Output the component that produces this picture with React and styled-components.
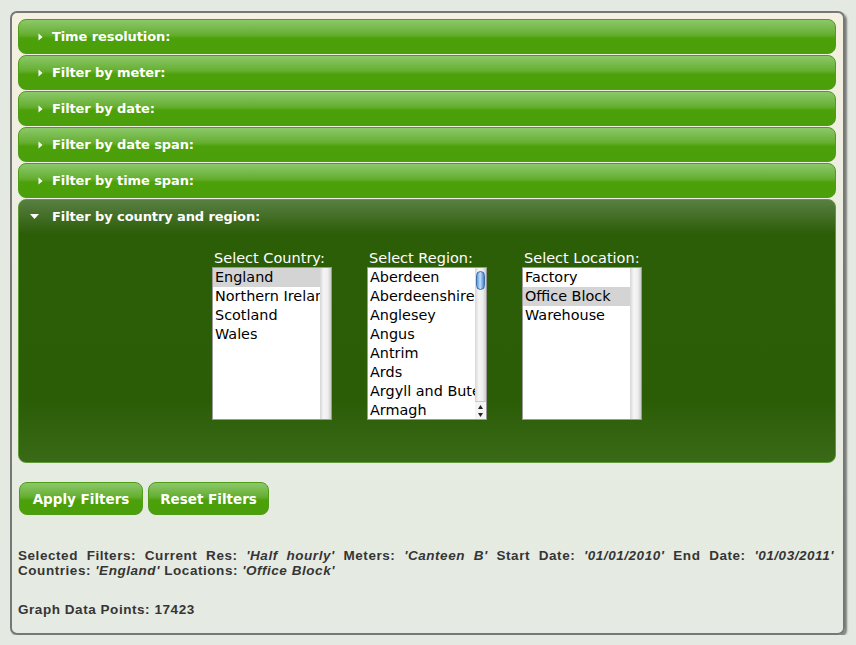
import styled, { createGlobalStyle } from "styled-components";

const GlobalStyle = createGlobalStyle`
  html, body {
    margin: 0;
    padding: 0;
    background: #e4eae2;
  }
  body {
    font-family: "DejaVu Sans", Verdana, sans-serif;
  }
`;

const Page = styled.div`
  padding: 11px 0 0 10px;
`;

const Frame = styled.div`
  box-sizing: border-box;
  width: 835px;
  height: 624px;
  padding: 6px 7px 6px 6px;
  border: 2px solid #777;
  border-radius: 7px;
  background: linear-gradient(#f5f0e0 0, #e9ece2 260px, #e5ebe2 100%);
  box-shadow: 2px 2px 2px rgba(0, 0, 0, 0.45);
`;

const Section = styled.div`
  box-sizing: border-box;
  margin-bottom: 1px;
  border: 1px solid ${(p) => (p.$open ? "#5e9a35" : "#4f9c16")};
  border-radius: 8px;
  background: ${(p) =>
    p.$open
      ? "linear-gradient(#587f43 0, #2c5d07 34px, #2b5c06 200px, #3a6a17 100%)"
      : "linear-gradient(#8cc86b 0, #65ae30 45%, #4ca10b 55%, #4a9f0a 100%)"};
`;

const Header = styled.div`
  height: 33px;
  display: flex;
  align-items: center;
  padding-left: 11px;
  color: #fff;
  font-size: 13px;
  font-weight: bold;
  letter-spacing: -0.1px;
`;

const Arrow = styled.span`
  width: 21px;
  display: flex;
  align-items: center;
  justify-content: ${(p) => (p.$open ? "flex-start" : "center")};
  margin-right: 1px;
`;

const Body = styled.div`
  display: flex;
  justify-content: center;
  gap: 35px;
  padding: 16px 0 42px;
`;

const Field = styled.div`
  display: flex;
  flex-direction: column;
  align-items: flex-start;
`;

const Label = styled.div`
  color: #fff;
  font-size: 14.5px;
  line-height: 18px;
  padding-left: 2px;
`;

const ListBox = styled.div`
  box-sizing: border-box;
  width: 120px;
  height: 153px;
  display: flex;
  border: 1px solid #9a9a9a;
  background: #fff;
  overflow: hidden;
`;

const Items = styled.div`
  flex: 1;
  min-width: 0;
  overflow: hidden;
`;

const Item = styled.div`
  height: 19px;
  line-height: 19px;
  padding-left: 2px;
  font-size: 14.4px;
  color: #000;
  white-space: nowrap;
  overflow: hidden;
  background: ${(p) => (p.$selected ? "#d4d4d4" : "transparent")};
`;

const Track = styled.div`
  width: 11px;
  flex: none;
  position: relative;
  background: linear-gradient(to right, #d6d6d6, #f6f6f6 35%, #eeeeee 70%, #cccccc);
`;

const Thumb = styled.div`
  position: absolute;
  top: 3px;
  left: 1px;
  width: 9px;
  height: 19px;
  border-radius: 5px;
  border: 1px solid #3a6fa8;
  box-sizing: border-box;
  background: linear-gradient(to right, #5f95d4, #c2e2ff 45%, #86b6ea 70%, #4a82c4);
`;

const Steppers = styled.div`
  position: absolute;
  left: 0;
  right: 0;
  bottom: 0;
  display: flex;
  flex-direction: column;
  align-items: center;
  gap: 4px;
  padding: 3px 0 2px;
  background: #f4f4f4;
  border-top: 1px solid #c9c9c9;
`;

const Actions = styled.div`
  display: flex;
  gap: 5px;
  margin: 19px 0 0 1px;
`;

const Button = styled.button`
  box-sizing: border-box;
  width: ${(p) => p.$w}px;
  height: 33px;
  padding: 0;
  border: 1px solid #4f9c16;
  border-radius: 8px;
  background: linear-gradient(#8cc86b 0, #65ae30 45%, #4ca10b 55%, #4a9f0a 100%);
  color: #fff;
  font-family: "DejaVu Sans", Verdana, sans-serif;
  font-size: 13.5px;
  font-weight: bold;
`;

const Summary = styled.div`
  margin-top: 33px;
  font-family: "Liberation Sans", Arial, sans-serif;
  font-size: 13.5px;
  font-weight: bold;
  letter-spacing: 0.55px;
  line-height: 15px;
  color: #353535;
  text-align: justify;
  width: 816px;
`;

const Value = styled.em`
  font-style: italic;
`;

const Points = styled.div`
  margin-top: 24px;
  font-family: "Liberation Sans", Arial, sans-serif;
  font-size: 13.5px;
  font-weight: bold;
  letter-spacing: 0.55px;
  line-height: 15px;
  color: #353535;
`;

const TriRight = () => (
  <svg width="5" height="8" viewBox="0 0 5 8">
    <path d="M0.5 0.5 L4.5 4 L0.5 7.5 Z" fill="#fff" />
  </svg>
);

const TriDown = () => (
  <svg width="9" height="5" viewBox="0 0 9 5">
    <path d="M0 0 L9 0 L4.5 5 Z" fill="#fff" />
  </svg>
);

const closed = [
  "Time resolution:",
  "Filter by meter:",
  "Filter by date:",
  "Filter by date span:",
  "Filter by time span:",
];

const countries = ["England", "Northern Ireland", "Scotland", "Wales"];
const regions = [
  "Aberdeen",
  "Aberdeenshire",
  "Anglesey",
  "Angus",
  "Antrim",
  "Ards",
  "Argyll and Bute",
  "Armagh",
];
const locations = ["Factory", "Office Block", "Warehouse"];

const List = ({ items, selected, scroll }) => (
  <ListBox>
    <Items>
      {items.map((it) => (
        <Item key={it} $selected={it === selected}>
          {it}
        </Item>
      ))}
    </Items>
    <Track>
      {scroll && (
        <>
          <Thumb />
          <Steppers>
            <svg width="5" height="4" viewBox="0 0 5 4">
              <path d="M0 4 L5 4 L2.5 0 Z" fill="#222" />
            </svg>
            <svg width="5" height="4" viewBox="0 0 5 4">
              <path d="M0 0 L5 0 L2.5 4 Z" fill="#222" />
            </svg>
          </Steppers>
        </>
      )}
    </Track>
  </ListBox>
);

export default function App() {
  return (
    <>
      <GlobalStyle />
      <Page>
        <Frame>
          {closed.map((t) => (
            <Section key={t}>
              <Header>
                <Arrow>
                  <TriRight />
                </Arrow>
                {t}
              </Header>
            </Section>
          ))}
          <Section $open>
            <Header>
              <Arrow $open>
                <TriDown />
              </Arrow>
              Filter by country and region:
            </Header>
            <Body>
              <Field>
                <Label>Select Country:</Label>
                <List items={countries} selected="England" />
              </Field>
              <Field>
                <Label>Select Region:</Label>
                <List items={regions} scroll />
              </Field>
              <Field>
                <Label>Select Location:</Label>
                <List items={locations} selected="Office Block" />
              </Field>
            </Body>
          </Section>
          <Actions>
            <Button $w={124}>Apply Filters</Button>
            <Button $w={121}>Reset Filters</Button>
          </Actions>
          <Summary>
            Selected Filters: Current Res: <Value>'Half hourly'</Value> Meters:{" "}
            <Value>'Canteen B'</Value> Start Date: <Value>'01/01/2010'</Value> End
            Date: <Value>'01/03/2011'</Value> Countries: <Value>'England'</Value>{" "}
            Locations: <Value>'Office Block'</Value>
          </Summary>
          <Points>Graph Data Points: 17423</Points>
        </Frame>
      </Page>
    </>
  );
}
